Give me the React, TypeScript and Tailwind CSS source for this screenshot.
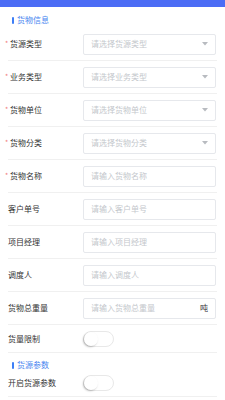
import React from "react";

const font = { fontFamily: '"Noto Sans CJK SC", "Noto Sans", sans-serif' };

function Title({ text, top }: { text: string; top: string }) {
  return (
    <div className={`flex items-center ${top} pl-[12px] h-[10px] box-content`}>
      <div className="w-[2px] h-[7px] bg-[#3d7ef7] rounded-[1px]" />
      <span className="ml-[3px] text-[8px] leading-[10px] text-[#4a86f0]">{text}</span>
    </div>
  );
}

function Label({ text, req }: { text: string; req?: boolean }) {
  return (
    <div className="relative w-[75px] shrink-0 flex items-center">
      {req ? (
        <>
          <span className="absolute left-[-3px] top-[-1px] text-[7px] leading-[10px] text-[#f07a7a]">*</span>
          <span className="ml-[2px] text-[8px] leading-[10px] text-[#333]">{text}</span>
        </>
      ) : (
        <span className="text-[8px] leading-[10px] text-[#333]">{text}</span>
      )}
    </div>
  );
}

function Row({
  label,
  req,
  placeholder,
  select,
  suffix,
}: {
  label: string;
  req?: boolean;
  placeholder: string;
  select?: boolean;
  suffix?: string;
}) {
  return (
    <div className="mx-[8px] h-[33px] border-b border-[#f0f0f0] flex items-center">
      <Label text={label} req={req} />
      <div className="w-[133px] h-[21px] border border-[#e6e8ec] rounded-[2px] flex items-center pl-[7px] pr-[7px]">
        <span className="flex-1 text-[8px] leading-[10px] text-[#c4c7cc]">{placeholder}</span>
        {select && (
          <svg width="6" height="4" viewBox="0 0 6 4">
            <path d="M0 0 L6 0 L3 3.6 Z" fill="#b8bbc0" />
          </svg>
        )}
        {suffix && <span className="text-[8px] leading-[10px] text-[#333]">{suffix}</span>}
      </div>
    </div>
  );
}

function SwitchRow({ label, h }: { label: string; h: string }) {
  return (
    <div className={`mx-[8px] ${h} border-b border-[#f0f0f0] flex items-center`}>
      <Label text={label} />
      <div className="relative w-[31px] h-[16px] rounded-full border border-[#e8e8e8] bg-white">
        <div className="absolute left-0 top-0 w-[14px] h-[14px] rounded-full bg-white shadow-[-1px_1px_2px_rgba(0,0,0,0.25)]" />
      </div>
    </div>
  );
}

export default function App() {
  return (
    <div className="w-[225px] h-[400px] overflow-hidden bg-white" style={font}>
      <div className="h-[7px] bg-[#4b6cf5]" />
      <div className="h-[21px]">
        <Title text="货物信息" top="pt-[8px]" />
      </div>
      <Row label="货源类型" req placeholder="请选择货源类型" select />
      <Row label="业务类型" req placeholder="请选择业务类型" select />
      <Row label="货物单位" req placeholder="请选择货物单位" select />
      <Row label="货物分类" req placeholder="请选择货物分类" select />
      <Row label="货物名称" req placeholder="请输入货物名称" />
      <Row label="客户单号" placeholder="请输入客户单号" />
      <Row label="项目经理" placeholder="请输入项目经理" />
      <Row label="调度人" placeholder="请输入调度人" />
      <Row label="货物总重量" placeholder="请输入货物总重量" suffix="吨" />
      <SwitchRow label="货量限制" h="h-[28px]" />
      <div className="h-[17px]">
        <Title text="货源参数" top="pt-[7px]" />
      </div>
      <SwitchRow label="开启货源参数" h="h-[27px]" />
    </div>
  );
}
